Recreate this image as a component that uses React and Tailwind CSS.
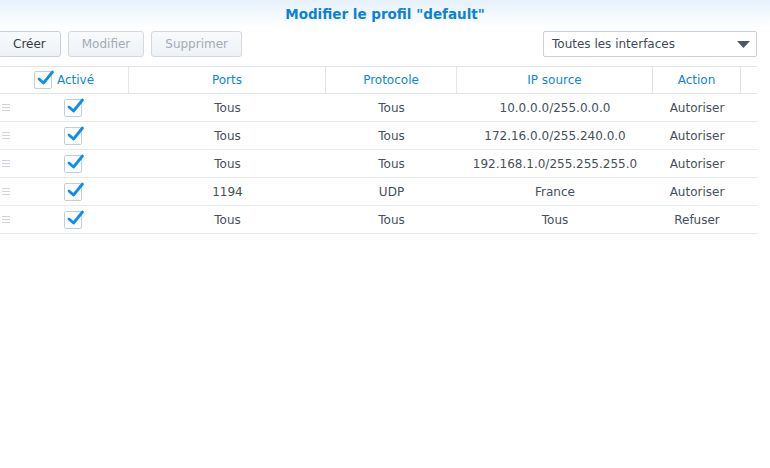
import React from "react";

const rows = [
  { ports: "Tous", proto: "Tous", ip: "10.0.0.0/255.0.0.0", action: "Autoriser" },
  { ports: "Tous", proto: "Tous", ip: "172.16.0.0/255.240.0.0", action: "Autoriser" },
  { ports: "Tous", proto: "Tous", ip: "192.168.1.0/255.255.255.0", action: "Autoriser" },
  { ports: "1194", proto: "UDP", ip: "France", action: "Autoriser" },
  { ports: "Tous", proto: "Tous", ip: "Tous", action: "Refuser" },
];

function Check() {
  return (
    <span className="relative inline-block w-[18px] h-[18px] border border-[#c5ced8] rounded-[2px] bg-white">
      <svg className="absolute left-[1px] top-[-3px]" width="19" height="18" viewBox="0 0 19 18">
        <path d="M3 10 L7.5 14 L16.5 3" fill="none" stroke="#0a8ef0" strokeWidth="2.8" strokeLinecap="round" strokeLinejoin="round" />
      </svg>
    </span>
  );
}

function Handle() {
  return (
    <span className="flex flex-col gap-[2px] w-[8px]">
      <span className="h-px bg-[#cfd5dc]" />
      <span className="h-px bg-[#cfd5dc]" />
      <span className="h-px bg-[#cfd5dc]" />
    </span>
  );
}

export default function App() {
  return (
    <div
      className="w-[770px] h-[468px] bg-white text-[12px] text-[#46505a] overflow-hidden"
      style={{ fontFamily: '"DejaVu Sans", Verdana, sans-serif' }}
    >
      <header className="h-[28px] flex items-center justify-center bg-gradient-to-b from-[#e6f1fc] to-white text-[13.5px] font-bold text-[#0a82d8]">
        Modifier le profil "default"
      </header>

      <div className="flex items-center justify-between h-[26px] mt-[3px] pr-[13px]">
        <div className="flex gap-[7px] -ml-[2px]">
          <button className="h-[26px] px-[14px] border border-[#c8d0da] rounded-[3px] bg-gradient-to-b from-[#f8fafc] to-[#eef2f6] text-[#333b44]">
            Créer
          </button>
          <button className="h-[26px] px-[13px] border border-[#d3d9e0] rounded-[3px] bg-gradient-to-b from-[#f8fafc] to-[#eef2f6] text-[#a3abb4]">
            Modifier
          </button>
          <button className="h-[26px] px-[13px] border border-[#d3d9e0] rounded-[3px] bg-gradient-to-b from-[#f8fafc] to-[#eef2f6] text-[#a3abb4]">
            Supprimer
          </button>
        </div>
        <div className="w-[214px] h-[26px] border border-[#c8d0da] rounded-[2px] flex items-center justify-between pl-[8px] pr-[6px] text-[#414b55]">
          <span>Toutes les interfaces</span>
          <svg width="13" height="7" viewBox="0 0 13 7">
            <path d="M0 0 H13 L6.5 7 Z" fill="#4f5860" />
          </svg>
        </div>
      </div>

      <div className="mt-[9px] mr-[13px] border-t border-[#dfe5eb]">
        <div className="flex h-[27px] border-b border-[#dfe5eb] text-[#0d86e0]">
          <div className="w-[129px] flex items-center justify-center gap-[5px] border-r border-[#dfe5eb]">
            <Check />
            <span>Activé</span>
          </div>
          <div className="w-[197px] flex items-center justify-center border-r border-[#dfe5eb]">Ports</div>
          <div className="w-[131px] flex items-center justify-center border-r border-[#dfe5eb]">Protocole</div>
          <div className="w-[196px] flex items-center justify-center border-r border-[#dfe5eb]">IP source</div>
          <div className="w-[88px] flex items-center justify-center border-r border-[#dfe5eb]">Action</div>
          <div className="flex-1" />
        </div>
        {rows.map((r, i) => (
          <div key={i} className="flex h-[28px] border-b border-[#e6eaef] items-center">
            <div className="w-[16px] pl-[2px] flex items-center">
              <Handle />
            </div>
            <div className="w-[113px] flex items-center justify-center">
              <Check />
            </div>
            <div className="w-[197px] text-center">{r.ports}</div>
            <div className="w-[131px] text-center">{r.proto}</div>
            <div className="w-[196px] text-center">{r.ip}</div>
            <div className="w-[88px] text-center">{r.action}</div>
            <div className="flex-1" />
          </div>
        ))}
      </div>
    </div>
  );
}
